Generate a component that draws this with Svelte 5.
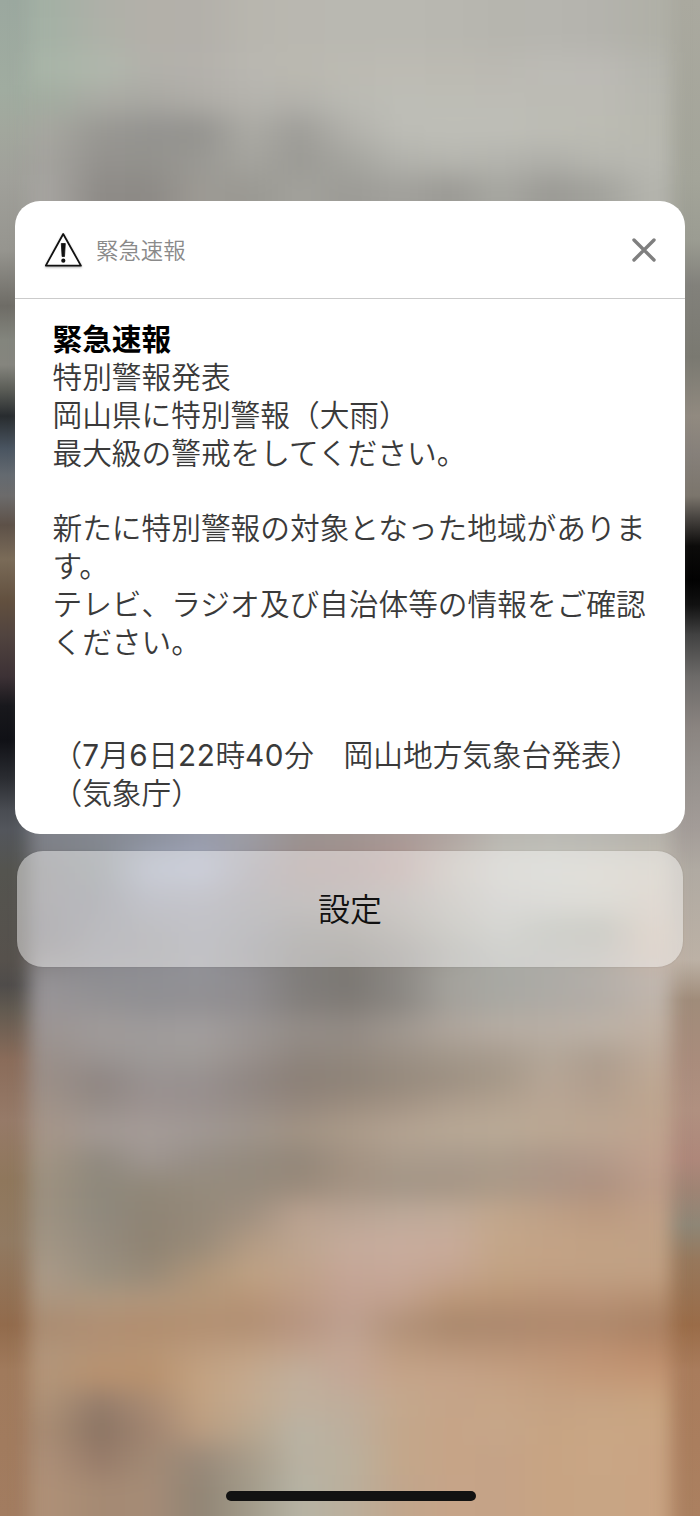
<script lang="ts">
	let open: boolean = true

	let lines: string[] = [
		"特別警報発表",
		"岡山県に特別警報（大雨）",
		"最大級の警戒をしてください。",
		"",
		"新たに特別警報の対象となった地域がありま",
		"す。",
		"テレビ、ラジオ及び自治体等の情報をご確認",
		"ください。",
		"",
		"",
		"（7月6日22時40分　岡山地方気象台発表）",
		"（気象庁）",
	]

	// blurred wallpaper: y position, then colours from x = 50 to x = 650
	let rows: [number, string][] = [
		[0, "a3b0a4 aeb0a8 b3b0a9 b3b0aa b8b6ae b9b7b0 b9b8b1 b9b8b1 b8b7b0 b6b5ae b6b5af b4b3ad b0b0a7"],
		[35, "a4b1a5 aeb1a8 b3b0a9 b3b0aa b8b6ae b9b7b0 b9b8b1 b9b8b1 b8b7b0 b6b5ae b6b5af b4b3ad b0b0a7"],
		[70, "a9b5a8 b0b8ac b2b1ab b4b1ac b9b7b1 bbb9b0 bcbab2 bdbbb3 bcbab2 bbb9b2 bcbbb5 bcbab5 b5b5ae"],
		[100, "a2aca0 aaaba4 a9a8a2 afada7 b5b3ad b3b2ac babab3 bdbdb6 bdbdb5 bdbcb5 bcbbb4 bcbbb4 b7b7af"],
		[130, "a6a69f 999893 949390 94938f abaaa4 9f9e99 b2b1ab bdbdb6 bebeb7 bebeb7 bdbdb5 bcbcb3 b8b8af"],
		[160, "a3a29d 94928e 93928d 999893 a5a49e 9b9a95 a5a59f b2b2ac b6b6af b4b4ae b0b0aa b7b7b0 b8b8b1"],
		[190, "a5a39f 8e8b87 8d8a86 9d9a94 9a9993 a2a19b 9c9b96 a2a19c 9b9a95 a7a7a1 9b9a95 a2a29c b4b4ad"],
		[835, "7f828a 848891 8b909c 979baa 9c9ca3 9a9391 9f9491 a89996 b0a5a1 b9b7b1 bbbab4 b8b7b2 b5b2ab"],
		[870, "7c7c7f 7f8589 9ca2b4 a2a7bb 97939b 9e8a88 a28c88 af9590 bbb2a9 c4c2bb c6c6bf c8c4b9 c6bfb2"],
		[900, "7c7a7f 7e7f88 9193a0 9595a0 918e93 958e8c 9c9391 a49c97 b2ada6 bdbbb6 c1bfb8 c4c1b6 c6bbaf"],
		[930, "78767c 83838a 8a8a91 909099 8a8a90 878381 8a857e 99938c a9a79e b4b4ad a7a99f a4a499 c6b6a7"],
		[955, "807c7e 88878d 8a898e 909096 878589 7f7c79 7f7a74 8a8580 9c9a94 a9aaa4 abaaa4 afaaa1 c4b2a5"],
		[980, "949295 8e8e92 909095 929297 8f8d90 807d7b 7a7773 8c8985 a6a49e a8a8a3 adaba7 b5b0ab c0b7b0"],
		[1000, "989497 949294 908f92 918f92 8f8c8e 827e7b 7f7a75 8a8681 a3a09a a9a8a2 aeaaa4 b2aca5 bfb4aa"],
		[1030, "9c9593 a09b9a 9f9b9b a29e9e 9a9593 948d88 938b85 a09890 afa59c b7ada3 b9afa5 bdb2a7 c0b1a3"],
		[1055, "9a908b 9b9593 9e9a98 a09b98 99918d 8f867f 93897f 9b9085 a3988b a89c8f b3a799 ad9f91 bcaa9a"],
		[1080, "9a8e87 8e8582 989190 97908f 8f8682 8b7f76 8d8277 95897c 9c8f81 a59888 b6a595 af9c8c bda793"],
		[1105, "9f9288 958c87 9c9290 99908e 968c86 94877d 9c8d7f a39384 ad9d8d b3a290 b9a694 b5a18f bda58f"],
		[1130, "a59589 a49a95 a59c98 a19994 9f958c a39484 ab9b8a b4a392 b8a895 baaa97 bba893 bca692 bfa48f"],
		[1160, "a09383 918a80 9f9691 978e86 958b7f 93877a a39282 aa9b8b aa9b8c ac9c8b ad9889 b39a8a bfa08d"],
		[1185, "9b907f 8e887b 918879 958b7c 958a7c 998a7a a39282 a39586 a59585 aa9987 ac9585 ad9180 bb9c88"],
		[1215, "9c9181 8f897d 8f8475 948879 a09080 b9a18f b9a494 bda999 c0aa98 c1a68c bea086 bb9a80 c0a087"],
		[1245, "a19584 958b7e 8f8372 998b79 b39b83 bda590 c5ab9b c8ac9d c8ab9a c4a689 c3a386 c2a285 c0a185"],
		[1275, "a99987 99907f 988a78 ae9579 bea183 c0a28a c5a697 c6a898 c4a490 c2a283 c2a083 c0a083 c1a083"],
		[1300, "ac967f af977e b1967b b49678 b89577 bc9b84 c2a191 c1a08c bb9778 b99475 b89275 b99276 b58f70"],
		[1325, "aa8b70 b08e72 b18d6e b28f71 b18f73 b69480 bda090 b19179 a9876c aa876d ae886c ad886b a98164"],
		[1350, "b0947a b39274 b69474 bb9a7c bf9f82 c0a28c c3a694 bc9b80 b9967a b99477 ba9275 bc9071 b88a69"],
		[1375, "b39578 b9926f b9926e c3a281 c4a98e c0af9c c4a796 c5a489 c5a388 c4a083 c39c7c c39877 c49775"],
		[1405, "ac9076 947c6b a98b73 c1a181 c2aa90 c0b09d bfad9a c4a88d c5a488 c6a587 c5a283 c6a383 c8a480"],
		[1430, "a68a72 8b7463 a08470 ba9c80 b8a68e b9b3a4 bdae9c c3a78b c6a487 c6a689 c7a483 c9a684 c9a583"],
		[1460, "ab8e77 977b69 a18974 998979 a89c8a b9b2a2 bbb09d c3a78b c6a487 c5a387 c8a483 c9a685 c9a483"],
		[1490, "ae9077 a58a73 a58b76 918575 a29b8a b6b3a4 bbaf9c c1a68c c6a488 c5a387 c8a483 c8a584 c9a483"],
	]

	let bands = rows.map(([y, colors], i) => {
		let top = i === 0 ? -60 : i === 7 ? 600 : (rows[i - 1][0] + y) / 2
		let bottom = i === rows.length - 1 ? 1580 : i === 6 ? 600 : (y + rows[i + 1][0]) / 2
		return { top, height: bottom - top + 0.5, colors: colors.split(" ") }
	})

	let left: [number, string][] = [
		[0, "#9ba89f"], [90, "#a0aca0"], [130, "#a2a79d"], [180, "#a0a09a"], [250, "#96958f"],
		[306, "#6e6c66"], [340, "#83857d"], [365, "#85857e"], [390, "#5a5c56"], [416, "#282c2f"],
		[449, "#4a5561"], [475, "#646a70"], [496, "#6c6b6b"], [525, "#5d5148"], [559, "#7a6b58"],
		[601, "#62503f"], [635, "#51443f"], [677, "#3c3135"], [706, "#18181c"], [740, "#101116"],
		[778, "#2a2c31"], [811, "#4a4d53"], [830, "#53565c"], [870, "#54544f"], [960, "#56514c"],
		[985, "#4f4c4a"], [1010, "#625a50"], [1060, "#8a6c5a"], [1120, "#967a68"], [1180, "#8f775c"],
		[1240, "#917a62"], [1325, "#926b4c"], [1370, "#a07a5c"], [1516, "#a27c60"],
	]

	let right: [number, string][] = [
		[0, "#aaa99f"], [180, "#a3a499"], [240, "#9b9c92"], [285, "#82817b"], [357, "#7a7971"],
		[416, "#918a80"], [454, "#86807a"], [496, "#7b756c"], [517, "#4a4642"], [546, "#0c0b0a"],
		[580, "#020202"], [605, "#111111"], [635, "#424242"], [677, "#6d6b69"], [727, "#8a8480"],
		[769, "#95908c"], [828, "#a39c98"], [870, "#b0aaa2"], [960, "#bcb1a5"], [1000, "#a08c7a"],
		[1060, "#a98c7c"], [1110, "#b09080"], [1160, "#ae877a"], [1190, "#9f8474"], [1225, "#8e8676"],
		[1260, "#97785c"], [1325, "#9a6c48"], [1370, "#a97c5c"], [1516, "#ab8060"],
	]
</script>

<svelte:head>
	<title>緊急速報</title>
</svelte:head>

<div class="screen">
	<svg class="wallpaper" viewBox="0 0 700 1516" aria-hidden="true">
		<defs>
			<filter id="soft" filterUnits="userSpaceOnUse" x="-60" y="-60" width="820" height="1640" color-interpolation-filters="sRGB">
				<feGaussianBlur stdDeviation="9 13" />
			</filter>
			<linearGradient id="left" gradientUnits="userSpaceOnUse" x1="0" y1="0" x2="0" y2="1516">
				{#each left as [y, color]}
					<stop offset={y / 1516} stop-color={color} />
				{/each}
			</linearGradient>
			<linearGradient id="right" gradientUnits="userSpaceOnUse" x1="0" y1="0" x2="0" y2="1516">
				{#each right as [y, color]}
					<stop offset={y / 1516} stop-color={color} />
				{/each}
			</linearGradient>
			{#each bands as band, i}
				<linearGradient id="band{i}" gradientUnits="userSpaceOnUse" x1="50" y1="0" x2="650" y2="0">
					{#each band.colors as color, j}
						<stop offset={j / 12} stop-color="#{color}" />
					{/each}
				</linearGradient>
			{/each}
		</defs>
		<rect width="350" height="1516" fill="url(#left)" />
		<rect x="350" width="350" height="1516" fill="url(#right)" />
		<g filter="url(#soft)">
			{#each bands as band, i}
				<rect x="29" y={band.top} width="642" height={band.height} fill="url(#band{i})" />
			{/each}
		</g>
	</svg>

	{#if open}
		<div class="card">
			<div class="header">
				<svg class="warning" width="40" height="38" viewBox="0 0 40 38">
					<path d="M20.2 3 L37.9 34.6 H2.8 Z" fill="#fff" stroke="#111" stroke-width="1.8" stroke-linejoin="round" />
					<path d="M18.3 12.5 H22.3 L21.5 25.5 H19.1 Z" fill="#111" stroke="#111" stroke-width="0.8" stroke-linejoin="round" />
					<circle cx="20.3" cy="29.7" r="2.1" fill="#111" />
				</svg>
				<span class="app">緊急速報</span>
				<button class="close" aria-label="閉じる" on:click={() => (open = false)}>
					<svg width="24" height="24" viewBox="0 0 24 24">
						<path d="M2 2 L22 22 M22 2 L2 22" stroke="#7f7f7f" stroke-width="3.4" stroke-linecap="round" />
					</svg>
				</button>
			</div>
			<div class="body">
				<h1>緊急速報</h1>
				{#each lines as line}
					<p>
						{#each line.split(/(\d+)/) as part, i}{#if i % 2}<span class="num">{part}</span>{:else}{part}{/if}{/each}
					</p>
				{/each}
			</div>
		</div>
	{/if}

	<button class="settings">設定</button>
	<div class="home"></div>
</div>

<style>
	:global(body) {
		margin: 0;
	}

	.screen {
		position: relative;
		box-sizing: border-box;
		width: 700px;
		height: 1516px;
		padding: 201px 15px 15px;
		display: flex;
		flex-direction: column;
		align-items: center;
		overflow: hidden;
		font-family: Inter, "Noto Sans CJK JP", sans-serif;
	}

	.wallpaper {
		position: absolute;
		inset: 0;
		width: 700px;
		height: 1516px;
		z-index: -1;
	}

	.card {
		width: 670px;
		height: 633px;
		border-radius: 25px;
		background: #fff;
	}

	.header {
		box-sizing: border-box;
		height: 98px;
		padding: 0 29px 0 28px;
		display: flex;
		align-items: center;
		border-bottom: 1px solid #cbcbcb;
	}

	.warning {
		filter: drop-shadow(0 1px 1px rgba(0, 0, 0, 0.3));
	}

	.app {
		margin-left: 13px;
		padding-bottom: 2px;
		font-size: 22.4px;
		font-weight: 350;
		color: #8a8a8a;
	}

	.close {
		margin-left: auto;
		padding: 0;
		border: none;
		background: none;
		display: flex;
		cursor: pointer;
	}

	.body {
		padding: 22px 0 0 37.5px;
		font-size: 29.7px;
		line-height: 37.85px;
		color: #3a3a3a;
		white-space: nowrap;
	}

	h1 {
		margin: 0;
		font-size: inherit;
		font-weight: 700;
		color: #000;
	}

	p {
		margin: 0;
		height: 37.85px;
		font-weight: 350;
	}

	.num {
		font-weight: 400;
		letter-spacing: 0.6px;
	}

	.settings {
		width: 666px;
		height: 116px;
		margin-top: 17px;
		padding: 0 0 4px;
		border: none;
		border-radius: 26px;
		background: rgba(255, 255, 255, 0.45);
		box-shadow: 0 0 2px rgba(0, 0, 0, 0.12);
		font-family: inherit;
		font-size: 32px;
		font-weight: 350;
		color: #111;
		cursor: pointer;
	}

	.home {
		width: 250px;
		height: 10px;
		margin: auto 0 0 2px;
		border-radius: 5px;
		background: #121212;
	}
</style>
